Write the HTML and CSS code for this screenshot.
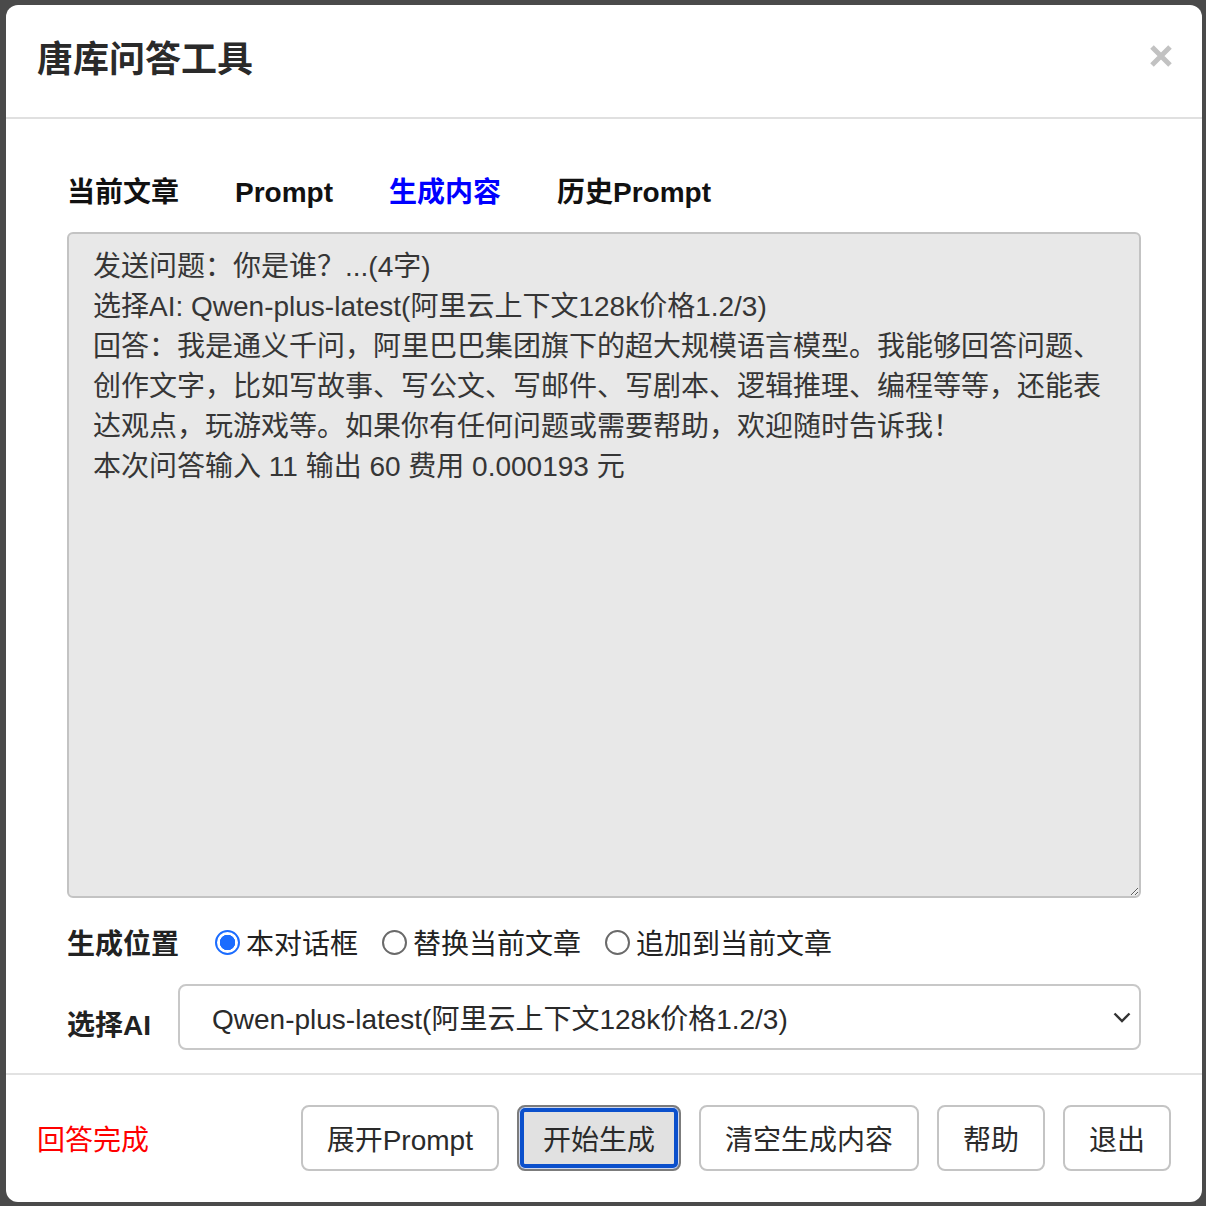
FILE: index.html
```html
<!DOCTYPE html>
<html lang="zh-CN">
<head>
<meta charset="utf-8">
<title>唐库问答工具</title>
<link rel="stylesheet" href="styles.css">
</head>
<body>
<div class="dialog">
  <header class="dlg-header">
    <h1 class="dlg-title">唐库问答工具</h1>
    <button class="close-btn" aria-label="关闭">
      <svg width="22" height="22" viewBox="0 0 22 22"><path d="M2 2 L20 20 M20 2 L2 20" stroke="#c2c2c2" stroke-width="5" fill="none"/></svg>
    </button>
  </header>
  <main class="dlg-body">
    <nav class="tabs">
      <span class="tab">当前文章</span>
      <span class="tab">Prompt</span>
      <span class="tab active">生成内容</span>
      <span class="tab">历史Prompt</span>
    </nav>
    <textarea class="output" readonly>发送问题：你是谁？...(4字)
选择AI: Qwen-plus-latest(阿里云上下文128k价格1.2/3)
回答：我是通义千问，阿里巴巴集团旗下的超大规模语言模型。我能够回答问题、创作文字，比如写故事、写公文、写邮件、写剧本、逻辑推理、编程等等，还能表达观点，玩游戏等。如果你有任何问题或需要帮助，欢迎随时告诉我！
本次问答输入 11 输出 60 费用 0.000193 元</textarea>
    <div class="row pos-row">
      <span class="row-label">生成位置</span>
      <label class="radio"><input type="radio" name="pos" checked><span>本对话框</span></label>
      <label class="radio"><input type="radio" name="pos"><span>替换当前文章</span></label>
      <label class="radio"><input type="radio" name="pos"><span>追加到当前文章</span></label>
    </div>
    <div class="row ai-row">
      <span class="row-label">选择AI</span>
      <div class="select">
        <span class="select-text">Qwen-plus-latest(阿里云上下文128k价格1.2/3)</span>
        <svg class="chev" width="18" height="11" viewBox="0 0 18 11"><path d="M1.5 1.5 L9 9 L16.5 1.5" stroke="#333" stroke-width="2.4" fill="none"/></svg>
      </div>
    </div>
  </main>
  <footer class="dlg-footer">
    <span class="status">回答完成</span>
    <div class="btns">
      <button class="btn">展开Prompt</button>
      <button class="btn focused">开始生成</button>
      <button class="btn">清空生成内容</button>
      <button class="btn">帮助</button>
      <button class="btn">退出</button>
    </div>
  </footer>
</div>
</body>
</html>
```
FILE: styles.css
```css
html, body {
  margin: 0;
  height: 100%;
}
body {
  background: #4a4a4a;
  padding: 5px 4px 4px 6px;
  box-sizing: border-box;
  font-family: "Liberation Sans", "Noto Sans CJK SC", sans-serif;
  color: #222;
}
.dialog {
  background: #fff;
  border-radius: 12px;
  height: 1197px;
  display: flex;
  flex-direction: column;
  overflow: hidden;
}
.dlg-header {
  height: 110px;
  border-bottom: 2px solid #e0e0e0;
  display: flex;
  align-items: center;
  justify-content: space-between;
  padding: 2px 30px 0 31px;
  flex: none;
}
.dlg-title {
  margin: 0;
  font-size: 36px;
  font-weight: bold;
  color: #2a2a2a;
  line-height: 44px;
  margin-top: -4px;
}
.close-btn {
  border: 0;
  background: none;
  padding: 0;
  margin-top: -12px;
  width: 22px;
  height: 22px;
  display: flex;
}
.dlg-body {
  flex: 1;
  padding: 54px 61px 0 61px;
  display: flex;
  flex-direction: column;
}
.tabs {
  display: flex;
  gap: 56px;
  font-size: 28px;
  font-weight: bold;
  line-height: 40px;
  color: #111;
}
.tab.active {
  color: #0000ff;
}
.output {
  margin-top: 19px;
  height: 666px;
  box-sizing: border-box;
  background: #e8e8e8;
  border: 2px solid #c3c3c3;
  border-radius: 6px;
  padding: 13px 24px 12px 24px;
  font-family: "Liberation Sans", "Noto Sans CJK SC", sans-serif;
  font-size: 28px;
  line-height: 40px;
  color: #363636;
  resize: vertical;
  outline: none;
}
.row {
  display: flex;
  align-items: center;
}
.pos-row {
  margin-top: 24px;
  height: 40px;
  font-size: 28px;
}
.row-label {
  font-size: 28px;
  font-weight: bold;
  color: #222;
}
.radio {
  display: flex;
  align-items: center;
  gap: 6px;
  color: #222;
  margin-left: 24px;
}
.pos-row .row-label + .radio {
  margin-left: 36px;
}
.radio input {
  appearance: none;
  -webkit-appearance: none;
  margin: 0;
  width: 25px;
  height: 25px;
  border-radius: 50%;
  border: 2px solid #6a6a6a;
  box-sizing: border-box;
  background: #fff;
}
.radio input:checked {
  border: 2.5px solid #1b6cff;
  background: radial-gradient(circle, #1b6cff 0 7.5px, #fff 8px);
}
.ai-row {
  margin-top: 22px;
  gap: 27px;
}
.ai-row .row-label {
  padding-top: 12px;
}
.select {
  flex: 1;
  height: 66px;
  box-sizing: border-box;
  border: 2px solid #c8c8c8;
  border-radius: 8px;
  display: flex;
  align-items: center;
  justify-content: space-between;
  padding: 0 8px 0 32px;
  font-size: 28px;
  color: #2a2a2a;
}
.dlg-footer {
  flex: none;
  height: 129px;
  box-sizing: border-box;
  border-top: 2px solid #e2e2e2;
  margin-top: 21px;
  display: flex;
  align-items: center;
  justify-content: space-between;
  padding: 0 31px 1px 31px;
}
.status {
  color: #ff0000;
  font-size: 28px;
}
.btns {
  display: flex;
  gap: 18px;
}
.btn {
  height: 66px;
  box-sizing: border-box;
  border: 2px solid #c4c4c4;
  border-radius: 8px;
  background: #fff;
  padding: 0 24px;
  font-family: "Liberation Sans", "Noto Sans CJK SC", sans-serif;
  font-size: 28px;
  color: #2a2a2a;
}
.btn.focused {
  border-color: #7c7c7c;
  background: #e1e1e1;
  box-shadow: inset 0 0 0 1px #cfd8ee, inset 0 0 0 5px #0b50cc;
}
```
